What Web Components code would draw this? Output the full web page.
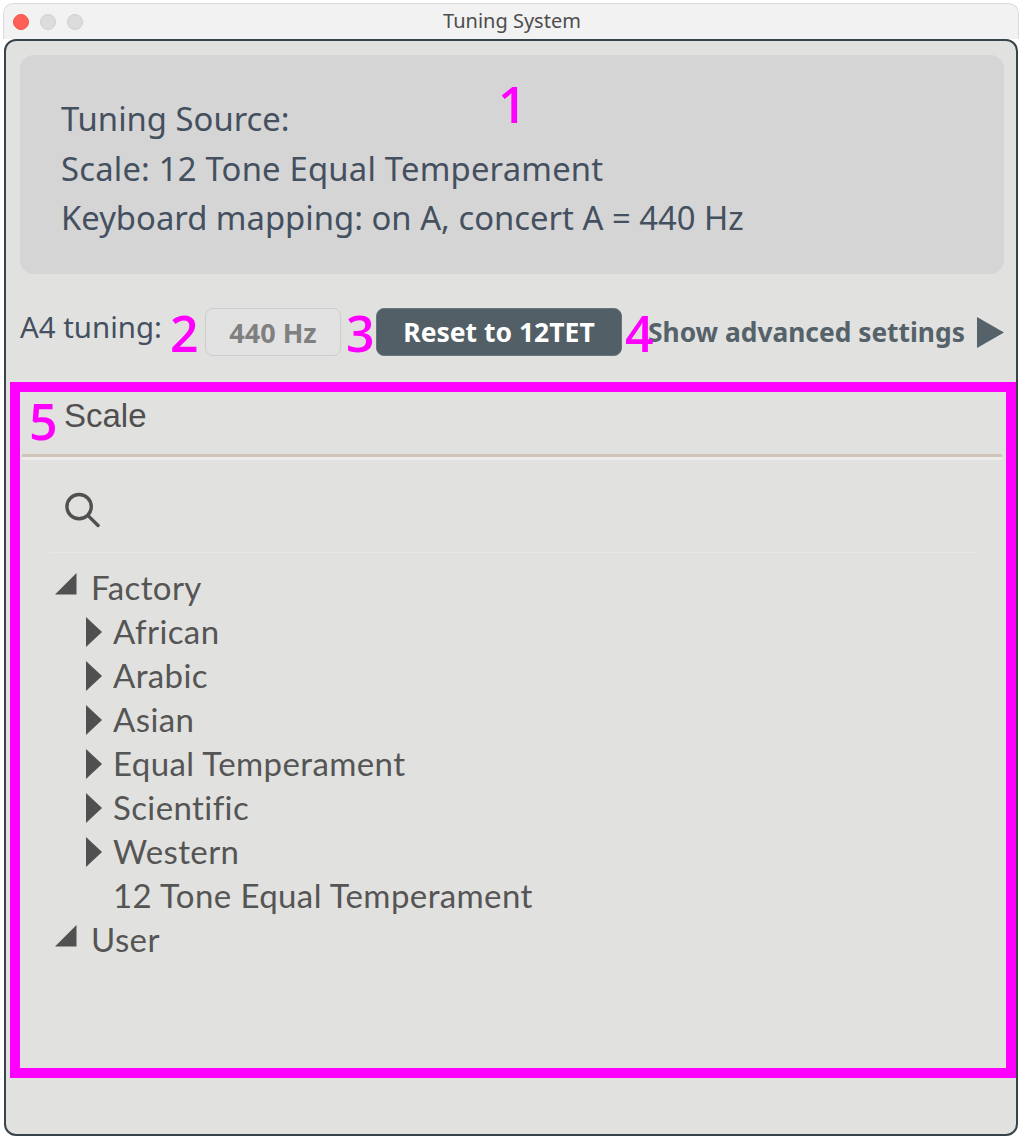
<!DOCTYPE html>
<html>
<head>
<meta charset="utf-8">
<title>Tuning System</title>
<style>
  html, body { margin: 0; padding: 0; background: #fff; }
  body { width: 1019px; height: 1136px; overflow: hidden; font-family: "Noto Sans", sans-serif; }
</style>
</head>
<body>
<tuning-window title="Tuning System">
  <source-card>
    <div>Tuning Source:</div>
    <div style="letter-spacing:.2px">Scale: 12 Tone Equal Temperament</div>
    <div>Keyboard mapping: on A, concert A = 440 Hz</div>
  </source-card>
  <tuning-controls></tuning-controls>
  <scale-browser></scale-browser>
</tuning-window>

<script>
class TuningWindow extends HTMLElement {
  constructor() {
    super();
    this.attachShadow({ mode: 'open' });
  }

  connectedCallback() {
    this.shadowRoot.innerHTML = `
      <style>
      :host { display: flex; flex-direction: column; width: 1019px; height: 1136px; box-sizing: border-box; position: relative; }
      .bar {
        height: 36px;
        margin: 3px 0 0 3px;
        box-sizing: border-box;
        background: #f2f2f2;
        border: 1px solid #dcdcdc;
        border-bottom: none;
        border-radius: 10px 10px 0 0;
        display: flex;
        align-items: center;
        position: relative;
        flex: none;
      }
      .lights { display: flex; gap: 11px; padding-left: 9px; }
      .lights i { width: 16px; height: 16px; border-radius: 50%; background: #dcdcdc; border: 1px solid #cfcfcf; box-sizing: border-box; display: block; }
      .lights i:first-child { background: #ff5f57; border-color: #f0544c; }
      .name {
        position: absolute; left: 0; right: 0; top: 5px; text-align: center;
        font: 20px/24px "Noto Sans", sans-serif; color: #4d4d4d; padding-left: 2px;
      }
      .body {
        flex: 1;
        margin: 0 1px 0 4px;
        background: #e1e1df;
        border: 2px solid #39434a;
        border-radius: 12px;
        box-sizing: border-box;
        padding: 14px 11px 0 14px;
        display: flex;
        flex-direction: column;
      }
      </style>
      <div class="bar">
        <div class="lights"><i></i><i></i><i></i></div>
        <div class="name">${this.getAttribute('title')}</div>
      </div>
      <div class="body"><slot></slot></div>
    `;
  }
}

class SourceCard extends HTMLElement {
  constructor() {
    super();
    this.attachShadow({ mode: 'open' });
  }

  connectedCallback() {
    this.shadowRoot.innerHTML = `
      <style>
      :host {
        display: block;
        height: 219px;
        width: 984px;
        box-sizing: border-box;
        background: #d5d5d5;
        border-radius: 14px;
        padding: 39px 41px 0;
        font: 32.8px/49.5px "Noto Sans", sans-serif;
        color: #44505f;
        position: relative;
      }
      .mark { position: absolute; left: 478px; top: 15px; font: 600 50px/68px "Open Sans", sans-serif; color: #ff00ff; }
      </style>
      <slot></slot>
      <span class="mark">1</span>
    `;
  }
}

class TuningControls extends HTMLElement {
  constructor() {
    super();
    this.attachShadow({ mode: 'open' });
  }

  connectedCallback() {
    this.shadowRoot.innerHTML = `
      <style>
      :host { display: flex; align-items: center; height: 48px; margin-top: 34px; position: relative; font-family: "Noto Sans", sans-serif; }
      .label { font-size: 29.4px; color: #44505f; width: 185px; flex: none; position: relative; top: -5px; }
      .hz {
        width: 136px; height: 48px; box-sizing: border-box; flex: none;
        border: 1px solid #cdcdcd; border-radius: 8px; background: #e2e2e2;
        display: flex; align-items: center; justify-content: center;
        font-size: 27px; font-weight: 700; color: #808080;
      }
      .reset {
        width: 246px; height: 48px; margin-left: 35px; box-sizing: border-box; flex: none;
        background: #525f66; border: 1px solid #69757b; border-radius: 8px; color: #fff;
        display: flex; align-items: center; justify-content: center;
        font-size: 26.5px; font-weight: 700;
      }
      .advanced { display: flex; align-items: center; margin-left: 26px; flex: none; font-size: 26.35px; font-weight: 700; color: #55626a; white-space: nowrap; }
      .advanced svg { margin-left: 12px; }
      .mark { position: absolute; top: -9px; font: 600 50px/68px "Open Sans", sans-serif; color: #ff00ff; }
      </style>
      <span class="label">A4 tuning:</span>
      <span class="hz">440 Hz</span>
      <span class="reset">Reset to 12TET</span>
      <span class="advanced">Show advanced settings
        <svg width="27" height="31" viewBox="0 0 27 31"><path d="M0 0L27 15.500L0 31Z" fill="#55626a"/></svg>
      </span>
      <span class="mark" style="left:150px">2</span>
      <span class="mark" style="left:326px">3</span>
      <span class="mark" style="left:605px">4</span>
    `;
  }
}

class TreeRow extends HTMLElement {
  constructor() {
    super();
    this.attachShadow({ mode: 'open' });
  }

  connectedCallback() {
    const icon = this.getAttribute('icon');
    const open = '<svg width="22" height="22" viewBox="0 0 22 22"><path d="M0 21.500L21.500 0V21.500Z" fill="#505050"/></svg>';
    const closed = '<svg width="16" height="30" viewBox="0 0 16 30"><path d="M0 0L16 15L0 30Z" fill="#505050"/></svg>';
    this.shadowRoot.innerHTML = `
      <style>
      :host { display: flex; align-items: center; height: 44px; position: relative; font: 400 33px/44px "Lato", sans-serif; letter-spacing: .4px; color: #555; white-space: nowrap; }
      .ico { position: absolute; display: flex; }
      .open { left: 35px; top: 7px; }
      .closed { left: 66px; top: 7px; }
      .txt { margin-top: -2px; }
      :host([icon="open"]) .txt { margin-left: 71px; }
      :host(:not([icon="open"])) .txt { margin-left: 93px; }
      </style>
      ${icon === 'open' ? `<span class="ico open">${open}</span>` : ''}
      ${icon === 'closed' ? `<span class="ico closed">${closed}</span>` : ''}
      <span class="txt"><slot></slot></span>
    `;
  }
}

class ScaleBrowser extends HTMLElement {
  constructor() {
    super();
    this.attachShadow({ mode: 'open' });
  }

  connectedCallback() {
    const rows = [
      ['open', 'Factory'], ['closed', 'African'], ['closed', 'Arabic'], ['closed', 'Asian'],
      ['closed', 'Equal Temperament'], ['closed', 'Scientific'], ['closed', 'Western'],
      ['', '12 Tone Equal Temperament'], ['open', 'User']
    ];
    this.shadowRoot.innerHTML = `
      <style>
      :host {
        display: block; height: 696px; margin: 26px 0 0 -10px; width: 1006px;
        box-sizing: border-box; border: 10px solid #ff00ff; position: relative;
      }
      .head { height: 62px; padding-left: 44px; font: 33px/48px "Liberation Sans", sans-serif; color: #505050; }
      .rule { height: 6px; margin: 0 4px 0 2px; background: linear-gradient(#cfc5bb 0 3px, #ebebe9 3px 6px); }
      .search { height: 93px; margin: 0 30px; border-bottom: 1px solid #e6e6e4; box-sizing: border-box; padding: 32px 0 0 15px; }
      .search svg { display: block; }
      .tree { padding-top: 13px; }
      .mark { position: absolute; left: 9px; top: -5px; font: 600 50px/68px "Open Sans", sans-serif; color: #ff00ff; }
      </style>
      <div class="head">Scale</div>
      <div class="rule"></div>
      <div class="search">
        <svg width="35" height="36" viewBox="0 0 36 36" fill="none" stroke="#505050" stroke-width="3.500" stroke-linecap="round">
          <circle cx="14.500" cy="14.500" r="12.500"/><path d="M24 24L34 34"/>
        </svg>
      </div>
      <div class="tree">
        ${rows.map(r => `<tree-row ${r[0] ? `icon="${r[0]}"` : ''}>${r[1]}</tree-row>`).join('')}
      </div>
      <span class="mark">5</span>
    `;
  }
}

customElements.define('tuning-window', TuningWindow);
customElements.define('source-card', SourceCard);
customElements.define('tuning-controls', TuningControls);
customElements.define('tree-row', TreeRow);
customElements.define('scale-browser', ScaleBrowser);
</script>
</body>
</html>
